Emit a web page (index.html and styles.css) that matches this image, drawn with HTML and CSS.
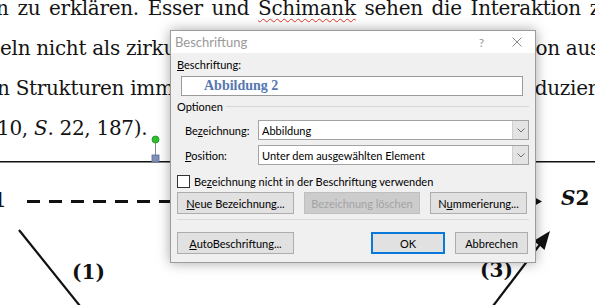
FILE: index.html
```html
<!DOCTYPE html>
<html lang="de">
<head>
    <meta charset="UTF-8">
    <title>Beschriftung</title>
    <link rel="stylesheet" href="styles.css">
</head>
<body>
    <svg class="diagram" width="595" height="305" viewBox="0 0 595 305">
        <line x1="0" y1="161.75" x2="595" y2="161.75" stroke="#111" stroke-width="1.5"/>
        <line x1="155.5" y1="142" x2="155.5" y2="156" stroke="#8a8a8a" stroke-width="1"/>
        <circle cx="155.5" cy="139.5" r="3.5" fill="#2ec22e" stroke="#1c8f1c" stroke-width="0.8"/>
        <rect x="152" y="155" width="7" height="7" fill="#8190b8" stroke="#5c6b96" stroke-width="0.8"/>
        <line x1="27" y1="201.5" x2="534" y2="201.5" stroke="#111" stroke-width="3" stroke-dasharray="13 9"/>
        <polygon points="534,197 542,201.5 534,206" fill="#111"/>
        <text x="6" y="207" text-anchor="end" class="node">S1</text>
        <text x="561" y="205" class="node"><tspan font-style="italic">S</tspan>2</text>
        <line x1="19" y1="230" x2="80" y2="306" stroke="#111" stroke-width="2.2"/>
        <text x="72" y="279" class="edge">(1)</text>
        <line x1="493" y1="306" x2="541" y2="243" stroke="#111" stroke-width="2.2"/>
        <polygon points="550,231 544.5,250 539,245 533.5,241" fill="#111"/>
        <text x="480" y="277" class="edge">(3)</text>
    </svg>

    <div class="doc">
        <div class="line first">n zu erklären. Esser und <span class="typo">Schimank</span> sehen die Interaktion z</div>
        <div class="line split"><span>eln nicht als zirkulären</span><span>on aus</span></div>
        <div class="line split"><span>n Strukturen immer wieder</span><span>duzier</span></div>
        <div class="line last">10, <i>S</i>. 22, 187).</div>
    </div>

    <div class="dialog">
        <div class="titlebar">
            <span class="title">Beschriftung</span>
            <span class="help">?</span>
            <svg class="close" width="10" height="10" viewBox="0 0 10 10">
                <path d="M0.5 0.5 L9.5 9.5 M9.5 0.5 L0.5 9.5" stroke="#8a8a8a" stroke-width="1"/>
            </svg>
        </div>
        <div class="dialog-body">
            <div class="field-label"><u>B</u>eschriftung:</div>
            <div class="caption-input">Abbildung 2</div>
            <div class="group-title"><span>Optionen</span><span class="rule"></span></div>
            <div class="option-row">
                <span class="option-label">Be<u>z</u>eichnung:</span>
                <div class="select">
                    <span class="value">Abbildung</span>
                    <span class="arrow"><svg width="8" height="5" viewBox="0 0 8 5"><path d="M0.5 0.5 L4 4 L7.5 0.5" fill="none" stroke="#707070" stroke-width="1"/></svg></span>
                </div>
            </div>
            <div class="option-row second">
                <span class="option-label"><u>P</u>osition:</span>
                <div class="select">
                    <span class="value">Unter dem ausgewählten Element</span>
                    <span class="arrow"><svg width="8" height="5" viewBox="0 0 8 5"><path d="M0.5 0.5 L4 4 L7.5 0.5" fill="none" stroke="#707070" stroke-width="1"/></svg></span>
                </div>
            </div>
            <div class="check-row"><span class="checkbox"></span>Be<u>z</u>eichnung nicht in der Beschriftung verwenden</div>
            <div class="button-row">
                <button class="btn wide"><u>N</u>eue Bezeichnung...</button>
                <button class="btn wide disabled" disabled>Bezeichnung löschen</button>
                <button class="btn numbering">N<u>u</u>mmerierung...</button>
            </div>
            <div class="separator"></div>
            <div class="button-row bottom">
                <button class="btn wide"><u>A</u>utoBeschriftung...</button>
                <button class="btn ok">OK</button>
                <button class="btn cancel">Abbrechen</button>
            </div>
        </div>
    </div>
</body>
</html>
```

FILE: styles.css
```css
* {
    box-sizing: border-box;
}
body {
    margin: 0;
    width: 595px;
    height: 305px;
    overflow: hidden;
    position: relative;
    background-color: #ffffff;
}
.diagram {
    position: absolute;
    left: 0;
    top: 0;
}
.diagram .node {
    font-family: "DejaVu Serif", serif;
    font-weight: bold;
    font-size: 20px;
    fill: #111;
}
.diagram .edge {
    font-family: "DejaVu Serif", serif;
    font-weight: bold;
    font-size: 20px;
    fill: #111;
}
.doc {
    position: relative;
    margin-top: -12px;
    font-family: "DejaVu Serif", serif;
    font-size: 20px;
    line-height: 40px;
    letter-spacing: -0.3px;
    color: #141414;
}
.line {
    white-space: nowrap;
}
.line.first {
    width: 604px;
    margin-left: -4px;
    white-space: normal;
    text-align-last: justify;
}
.line.split {
    display: flex;
    justify-content: space-between;
    width: 600px;
}
.line.split:nth-child(3) {
    margin-left: -3px;
}
.line.last {
    margin-left: -3px;
}
.typo {
    text-decoration: underline wavy #e0322b;
    text-decoration-thickness: 1px;
    text-underline-offset: 3px;
}

/* dialog */
.dialog {
    position: absolute;
    left: 170px;
    top: 30px;
    width: 366px;
    height: 233px;
    border: 1px solid #9c9c9c;
    background-color: #f0f0f0;
    box-shadow: 0 0 12px rgba(0, 0, 0, 0.35);
    font-family: Lato, "Noto Sans", sans-serif;
    font-size: 11px;
    color: #000;
    z-index: 2;
}
.titlebar {
    display: flex;
    align-items: center;
    height: 22px;
    padding-left: 4px;
    background-color: #ffffff;
}
.title {
    font-size: 13px;
    color: #9a9a9a;
}
.help {
    margin-left: auto;
    font-size: 12px;
    color: #9a9a9a;
}
.close {
    margin: 0 13px 0 28px;
}
.dialog-body {
    padding: 0 6px 0 6px;
}
.field-label {
    height: 14px;
    line-height: 14px;
    margin-top: 5px;
}
.caption-input {
    margin: 4px 0 0 4px;
    width: 342px;
    height: 20px;
    border: 1px solid #9a9a9a;
    background-color: #ffffff;
    padding-left: 22px;
    font-family: "Liberation Serif", serif;
    font-weight: bold;
    font-size: 14px;
    line-height: 18px;
    color: #5677b0;
}
.group-title {
    display: flex;
    align-items: center;
    height: 13px;
    margin-top: 4px;
}
.group-title .rule {
    flex: 1;
    margin-left: 3px;
    border-top: 1px solid #d6d6d6;
}
.option-row {
    display: flex;
    align-items: center;
    margin-top: 7px;
    height: 20px;
}
.option-row.second {
    margin-top: 5px;
}
.option-label {
    width: 81px;
    padding-left: 8px;
}
.select {
    flex: 1;
    display: flex;
    align-items: center;
    height: 20px;
    border: 1px solid #a3a3a3;
    background-color: #ffffff;
}
.select .value {
    padding-left: 3px;
}
.select .arrow {
    margin-left: auto;
    width: 16px;
    height: 18px;
    display: flex;
    align-items: center;
    justify-content: center;
    background-color: #e3e3e3;
    border-left: 1px solid #d0d0d0;
}
.check-row {
    display: flex;
    align-items: center;
    height: 13px;
    margin-top: 10px;
}
.checkbox {
    width: 13px;
    height: 13px;
    margin-right: 4px;
    border: 1px solid #333333;
    background-color: #ffffff;
}
.button-row {
    display: flex;
    height: 22px;
    margin-top: 4px;
}
.button-row.bottom {
    margin-top: 12px;
}
.btn {
    height: 22px;
    padding: 0;
    border: 1px solid #adadad;
    background-color: #e1e1e1;
    font-family: Lato, "Noto Sans", sans-serif;
    font-size: 11px;
    color: #000;
}
.btn.wide {
    width: 117px;
}
.btn.disabled {
    width: 116px;
    margin-left: 10px;
    background-color: #cccccc;
    border-color: #bfbfbf;
    color: #a3a3a3;
}
.btn.numbering {
    width: 97px;
    margin-left: 10px;
}
.separator {
    margin-top: 5px;
    border-top: 1px solid #d9d9d9;
}
.btn.ok {
    width: 74px;
    margin-left: auto;
    border: 2px solid #0a78d7;
}
.btn.cancel {
    width: 73px;
    margin-left: 10px;
    margin-right: 1px;
}
```
